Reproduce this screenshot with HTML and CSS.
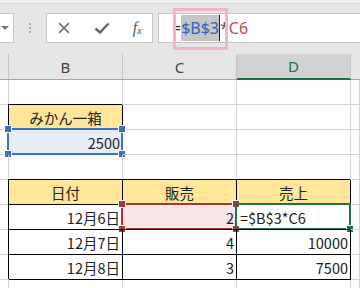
FILE: index.html
```html
<!DOCTYPE html>
<html lang="ja">
<head>
<meta charset="utf-8">
<link rel="stylesheet" href="styles.css">
</head>
<body>
<div class="app">
  <div class="toolbar">
    <div class="strip"></div>
    <div class="fbar">
      <div class="namebox"><span class="arrow"></span></div>
      <div class="dots"><i></i><i></i><i></i></div>
      <div class="fbtns">
        <svg class="ic" width="14" height="14" viewBox="0 0 14 14"><path d="M2 2L12 12M12 2L2 12" stroke="#666" stroke-width="1.6" fill="none"/></svg>
        <svg class="ic" width="16" height="14" viewBox="0 0 16 14"><path d="M1.5 7.5L6 11.5L14.5 2.5" stroke="#666" stroke-width="2.4" fill="none"/></svg>
        <span class="fx">f<sub>x</sub></span>
      </div>
      <div class="finput">
        <span class="eq">=</span><span class="selref">$B$3</span><span class="caret"></span><span class="op">*</span><span class="ref2">C6</span>
        <span class="hl"></span>
      </div>
    </div>
  </div>
  <div class="colheads">
    <div class="h"></div>
    <div class="h">B</div>
    <div class="h">C</div>
    <div class="h h-sel">D</div>
    <div class="h h-last"></div>
  </div>
  <div class="sheet">
    <div class="c"></div><div class="c"></div><div class="c"></div><div class="c"></div><div class="c"></div>

    <div class="c"></div><div class="c tb y center">みかん一箱</div><div class="c"></div><div class="c"></div><div class="c"></div>

    <div class="c"></div><div class="c num bluebg">2500<span class="sel sel-blue"><b class="hd tl"></b><b class="hd tr"></b><b class="hd bl"></b><b class="hd br"></b></span></div><div class="c"></div><div class="c"></div><div class="c"></div>

    <div class="c"></div><div class="c"></div><div class="c"></div><div class="c"></div><div class="c"></div>

    <div class="c"></div><div class="c tb y center">日付</div><div class="c tb y center">販売</div><div class="c tb y center">売上</div><div class="c"></div>

    <div class="c"></div><div class="c tb num">12月6日</div><div class="c tb num pinkbg">2<span class="sel sel-red"><b class="hd tl"></b><b class="hd tr"></b><b class="hd bl"></b><b class="hd br"></b></span></div><div class="c tb left">=$B$3*C6<span class="sel sel-green"><b class="hd br"></b></span></div><div class="c"></div>

    <div class="c"></div><div class="c tb num">12月7日</div><div class="c tb num">4</div><div class="c tb num">10000</div><div class="c"></div>

    <div class="c"></div><div class="c tb num">12月8日</div><div class="c tb num">3</div><div class="c tb num">7500</div><div class="c"></div>

    <div class="c"></div><div class="c"></div><div class="c"></div><div class="c"></div><div class="c"></div>
  </div>
</div>
</body>
</html>
```
FILE: styles.css
```css
* { box-sizing: border-box; }
html, body { margin: 0; padding: 0; background: #fff; }
.app {
  width: 360px;
  height: 288px;
  overflow: hidden;
  font-family: "Noto Sans CJK JP", "Noto Sans", sans-serif;
}
.toolbar {
  height: 54px;
  background: #e6e6e6;
}
.strip {
  height: 4px;
  background: #f1f1f1;
  border-bottom: 1px solid #dcdcdc;
}
.fbar {
  display: flex;
  align-items: stretch;
  height: 30px;
  margin-top: 9px;
}
.namebox {
  width: 14px;
  background: #fff;
  border: 1px solid #c6c6c6;
  border-left: none;
  position: relative;
  display: flex;
  align-items: center;
}
.arrow {
  margin-left: 1px;
  width: 0;
  height: 0;
  border-left: 4px solid transparent;
  border-right: 4px solid transparent;
  border-top: 4px solid #777;
}
.dots {
  width: 32px;
  display: flex;
  flex-direction: column;
  align-items: center;
  justify-content: center;
  gap: 2px;
}
.dots i {
  display: block;
  width: 2px;
  height: 2px;
  background: #b0b0b0;
}
.fbtns {
  width: 107px;
  background: #fff;
  border: 1px solid #c6c6c6;
  display: flex;
  align-items: center;
  justify-content: space-between;
  padding: 0 10px 0 10px;
}
.fx {
  font-family: "Liberation Serif", serif;
  font-style: italic;
  font-size: 16px;
  color: #555;
  line-height: 1;
}
.fx sub {
  font-size: 11px;
  vertical-align: -1px;
}
.finput {
  margin-left: 5px;
  flex: 1;
  background: #fff;
  border: 1px solid #c6c6c6;
  border-right: none;
  position: relative;
  display: flex;
  align-items: center;
  padding-left: 13px;
  font-family: "Noto Sans", sans-serif;
  font-size: 16px;
}
.eq { color: #333; }
.selref {
  color: #3461c1;
  background: #c6c6c6;
  line-height: 26px;
}
.caret {
  width: 1px;
  height: 26px;
  background: #222;
}
.op { color: #555; }
.ref2 { color: #c0504d; }
.hl {
  position: absolute;
  left: 14px;
  top: -6px;
  width: 55px;
  height: 42px;
  border: 3px solid #f5b3c9;
}
.colheads {
  display: grid;
  grid-template-columns: 9px 114px 114px 114px 1fr;
  height: 26px;
  background: #e6e6e6;
  border-bottom: 1px solid #a6a6a6;
}
.h {
  border-right: 1px solid #c4c4c4;
  display: flex;
  align-items: center;
  justify-content: center;
  font-family: "Noto Sans", sans-serif;
  font-size: 15px;
  color: #444;
}
.h-last { border-right: none; }
.h-sel {
  background: #d2d2d2;
  color: #217346;
  border-bottom: 2px solid #217346;
  margin-bottom: -1px;
}
.sheet {
  display: grid;
  grid-template-columns: 9px 114px 114px 114px 1fr;
  grid-auto-rows: 25px;
}
.c {
  border-right: 1px solid #d4d4d4;
  border-bottom: 1px solid #d4d4d4;
  position: relative;
  display: flex;
  align-items: center;
  font-size: 14.5px;
  color: #222;
  white-space: nowrap;
  padding-top: 1px;
}
.tb {
  border-right-color: #000;
  border-bottom-color: #000;
  box-shadow: -1px -1px 0 #000;
}
.y { background: #ffe699; }
.center { justify-content: center; }
.num { justify-content: flex-end; padding-right: 2px; }
.left { padding-left: 3px; }
.bluebg { background: #e8effa; }
.pinkbg { background: #fbe6e7; }
.sel {
  position: absolute;
  left: -2px;
  top: -2px;
  right: -1px;
  bottom: -1px;
  border: 2px solid;
}
.sel-blue { border-color: #3d6fc6; color: #3d6fc6; }
.sel-red { border-color: #a5383b; color: #a5383b; }
.sel-green { border-color: #217346; color: #217346; }
.hd {
  position: absolute;
  width: 6px;
  height: 6px;
  background: currentColor;
  outline: 1px solid #fff;
}
.tl { left: -4px; top: -4px; }
.tr { right: -4px; top: -4px; }
.bl { left: -4px; bottom: -4px; }
.br { right: -4px; bottom: -4px; }
```
